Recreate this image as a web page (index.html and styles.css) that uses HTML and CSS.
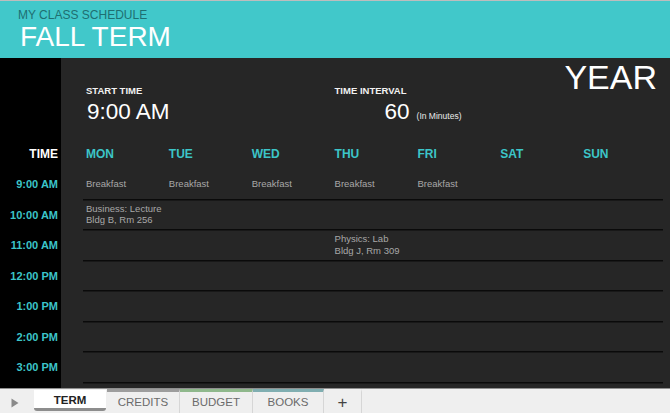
FILE: index.html
```html
<!DOCTYPE html>
<html lang="en">
<head>
<meta charset="utf-8">
<title>My Class Schedule</title>
<link rel="stylesheet" href="styles.css">
</head>
<body>
<div class="topline"></div>
<header class="hdr">
  <div class="sub">MY CLASS SCHEDULE</div>
  <div class="title">FALL TERM</div>
</header>
<main class="sched">
  <div class="row settings">
    <div class="t"></div>
    <div class="cells">
      <div class="field c1">
        <div class="lbl">START TIME</div>
        <div class="val start">9:00 AM</div>
      </div>
      <div class="field c4">
        <div class="lbl">TIME INTERVAL</div>
        <div class="val interval"><span class="num">60</span><span class="unit">(In Minutes)</span></div>
      </div>
      <div class="year">YEAR</div>
    </div>
  </div>
  <div class="row head">
    <div class="t head-t">TIME</div>
    <div class="cells">
      <div class="day">MON</div>
      <div class="day">TUE</div>
      <div class="day">WED</div>
      <div class="day">THU</div>
      <div class="day">FRI</div>
      <div class="day">SAT</div>
      <div class="day">SUN</div>
    </div>
  </div>
  <div class="row slot">
    <div class="t">9:00 AM</div>
    <div class="cells lined">
      <div class="cell">Breakfast</div>
      <div class="cell">Breakfast</div>
      <div class="cell">Breakfast</div>
      <div class="cell">Breakfast</div>
      <div class="cell">Breakfast</div>
      <div class="cell"></div>
      <div class="cell"></div>
    </div>
  </div>
  <div class="row slot">
    <div class="t">10:00 AM</div>
    <div class="cells lined">
      <div class="cell wide">Business: Lecture<br>Bldg B, Rm 256</div>
      <div class="cell"></div>
      <div class="cell"></div>
      <div class="cell"></div>
      <div class="cell"></div>
      <div class="cell"></div>
      <div class="cell"></div>
    </div>
  </div>
  <div class="row slot">
    <div class="t">11:00 AM</div>
    <div class="cells lined">
      <div class="cell"></div>
      <div class="cell"></div>
      <div class="cell"></div>
      <div class="cell wide">Physics: Lab<br>Bldg J, Rm 309</div>
      <div class="cell"></div>
      <div class="cell"></div>
      <div class="cell"></div>
    </div>
  </div>
  <div class="row slot">
    <div class="t">12:00 PM</div>
    <div class="cells lined"></div>
  </div>
  <div class="row slot">
    <div class="t">1:00 PM</div>
    <div class="cells lined"></div>
  </div>
  <div class="row slot">
    <div class="t">2:00 PM</div>
    <div class="cells lined"></div>
  </div>
  <div class="row slot">
    <div class="t">3:00 PM</div>
    <div class="cells lined"></div>
  </div>
  <div class="row fill">
    <div class="t"></div>
    <div class="cells"></div>
  </div>
</main>
<footer class="tabs">
  <div class="nav">
    <svg width="8" height="10" viewBox="0 0 8 10"><path d="M0.5 0.5 L7.5 5 L0.5 9.5 Z" fill="#8a8a8a"/></svg>
  </div>
  <div class="tab active">TERM</div>
  <div class="tab credits">CREDITS</div>
  <div class="tab budget">BUDGET</div>
  <div class="tab books">BOOKS</div>
  <div class="tab add">+</div>
</footer>
</body>
</html>
```
FILE: styles.css
```css
html, body {
  margin: 0;
  padding: 0;
}
body {
  width: 670px;
  height: 413px;
  overflow: hidden;
  font-family: "Liberation Sans", Arial, sans-serif;
  background: #262626;
}
.topline {
  height: 1px;
  background: #bdbdbd;
}
.hdr {
  box-sizing: border-box;
  height: 57px;
  background: #41c8ca;
  padding: 7px 0 0 18px;
}
.sub {
  font-size: 12px;
  line-height: 14px;
  color: #1f6f71;
}
.title {
  font-size: 28px;
  line-height: 30px;
  color: #ffffff;
  margin-left: 2px;
}
.sched {
  height: 330px;
  display: flex;
  flex-direction: column;
  background: #262626;
}
.row {
  display: flex;
  flex: none;
}
.t {
  width: 61px;
  flex: none;
  background: #000;
  box-sizing: border-box;
  padding-right: 3px;
  text-align: right;
  color: #3cc5c8;
  font-weight: bold;
  font-size: 11px;
}
.cells {
  flex: 1;
  margin: 0 7px 0 22px;
  display: grid;
  grid-template-columns: repeat(7, 1fr);
}
.settings {
  height: 81px;
}
.settings .cells {
  align-items: start;
}
.field {
  padding: 27px 0 0 3px;
  color: #fff;
}
.c1 { grid-column: 1 / 4; }
.c4 { grid-column: 4 / 6; }
.lbl {
  font-size: 9.5px;
  line-height: 11px;
  font-weight: bold;
  color: #f2f2f2;
}
.val {
  margin-top: 3px;
  font-size: 22.5px;
  line-height: 26px;
  color: #fff;
  white-space: nowrap;
}
.start {
  margin-left: 1px;
}
.num {
  margin-left: 50px;
}
.unit {
  margin-left: 7px;
  font-size: 8.5px;
  color: #eaeaea;
}
.year {
  grid-column: 6 / 8;
  text-align: right;
  padding: 2px 6px 0 0;
  font-size: 34px;
  line-height: 34px;
  color: #fff;
}
.head {
  height: 30px;
}
.head-t {
  color: #fff;
  font-size: 12px;
  line-height: 30px;
}
.day {
  padding-left: 3px;
  font-size: 12px;
  line-height: 30px;
  font-weight: bold;
  color: #3cc5c8;
}
.slot {
  height: 30.5px;
}
.slot .t {
  line-height: 30.5px;
  white-space: nowrap;
}
.lined {
  box-sizing: border-box;
  border-bottom: 1px solid #0a0a0a;
  box-shadow: 0 1px 0 #181818;
  align-items: center;
}
.cell {
  padding-left: 3px;
  font-size: 9.5px;
  line-height: 11.5px;
  color: #a8a8a8;
  white-space: nowrap;
}
.fill {
  flex: 1;
}
.tabs {
  box-sizing: border-box;
  height: 25px;
  background: #efefef;
  border-top: 1px solid #8f8f8f;
  display: flex;
  align-items: flex-start;
}
.nav {
  width: 34px;
  height: 24px;
  flex: none;
  display: flex;
  align-items: center;
  justify-content: center;
  padding-top: 4px;
  box-sizing: border-box;
  padding-right: 4px;
}
.tab {
  box-sizing: border-box;
  width: 73px;
  height: 24px;
  flex: none;
  border-right: 1px solid #d6d6d6;
  border-top: 3px solid transparent;
  display: flex;
  align-items: center;
  justify-content: center;
  font-size: 11.5px;
  color: #6b6b6b;
  padding-bottom: 1px;
}
.tab.active {
  height: 21px;
  border-top: 0;
  border-right: 0;
  margin-right: 1px;
  width: 72px;
  margin-top: 1px;
  background: #fff;
  border-bottom: 3px solid #8d8d8d;
  border-radius: 0 0 3px 3px;
  font-weight: bold;
  color: #222;
  padding: 1px 0 0 0;
}
.credits { border-top-color: #9d9d9d; }
.budget { border-top-color: #8fb88c; }
.books { border-top-color: #80aeb1; width: 71px; }
.add {
  width: 38px;
  font-size: 17px;
  color: #444;
  padding-bottom: 0;
}
```
